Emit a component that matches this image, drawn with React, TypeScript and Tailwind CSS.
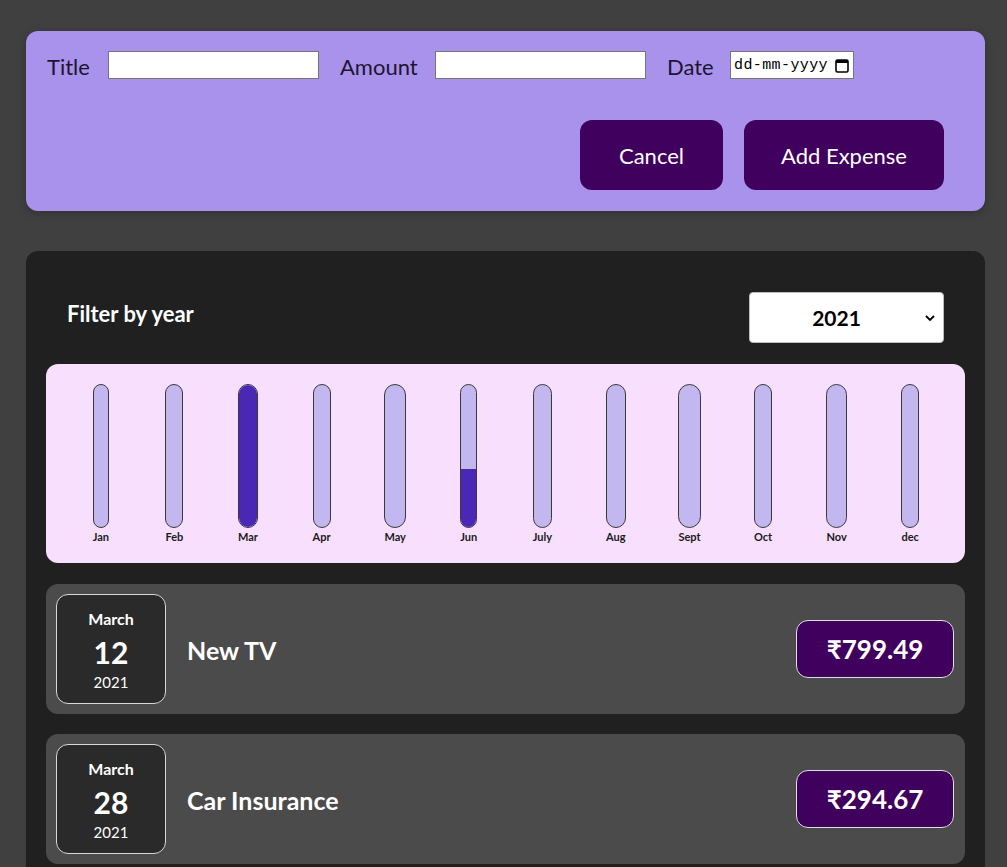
const months = [
  { label: 'Jan', fill: 0 },
  { label: 'Feb', fill: 0 },
  { label: 'Mar', fill: 100 },
  { label: 'Apr', fill: 0 },
  { label: 'May', fill: 0 },
  { label: 'Jun', fill: 41 },
  { label: 'July', fill: 0 },
  { label: 'Aug', fill: 0 },
  { label: 'Sept', fill: 0 },
  { label: 'Oct', fill: 0 },
  { label: 'Nov', fill: 0 },
  { label: 'dec', fill: 0 },
]

const expenses = [
  { month: 'March', day: '12', year: '2021', title: 'New TV', amount: '₹799.49' },
  { month: 'March', day: '28', year: '2021', title: 'Car Insurance', amount: '₹294.67' },
]

function ExpenseForm() {
  return (
    <div className="rounded-xl bg-[#a992ec] px-[21px] pt-5 pb-[21px] shadow-[0_2px_8px_rgba(0,0,0,0.25)]">
      <div className="flex h-[28px] items-center text-[22px] leading-[28px] text-[#1c1530]">
        <label className="mt-1 w-[61px]">Title</label>
        <input className="h-[28px] w-[211px] border border-[#767676] bg-white" />
        <label className="mt-1 ml-[21px] w-[95px]">Amount</label>
        <input className="h-[28px] w-[211px] border border-[#767676] bg-white" />
        <label className="mt-1 ml-[21px] w-[63px]">Date</label>
        <div className="flex h-[28px] w-[124px] items-center justify-between border border-[#767676] bg-white pl-[3px] pr-[4px] font-['Liberation_Mono',monospace] text-[15px] leading-none tracking-[0.4px] text-black">
          <span>dd-mm-yyyy</span>
          <svg width="14" height="15" viewBox="0 0 14 15">
            <rect x="1" y="2" width="12" height="12" rx="1.5" fill="none" stroke="#000" strokeWidth="1.6" />
            <rect x="1" y="2" width="12" height="3" fill="#000" />
          </svg>
        </div>
      </div>
      <div className="mt-[41px] flex justify-end gap-[21px] pr-[20px]">
        <button className="h-[70px] w-[143px] rounded-xl bg-[#40005d] text-[22px] text-white">Cancel</button>
        <button className="h-[70px] w-[200px] rounded-xl bg-[#40005d] text-[22px] text-white">Add Expense</button>
      </div>
    </div>
  )
}

function Chart() {
  return (
    <div className="grid grid-cols-12 rounded-xl bg-[#f8dffd] px-[18px] pt-5 pb-[19px]">
      {months.map((m) => (
        <div key={m.label} className="flex justify-center">
          <div className="inline-flex flex-col items-stretch">
            <div className="flex h-[144px] flex-col justify-end overflow-hidden rounded-full border border-[#3a3a3a] bg-[#c3b7f0]">
              <div className="bg-[#4a28b5]" style={{ height: `${m.fill}%` }} />
            </div>
            <span className="mt-[2px] text-center text-[11px] leading-[14px] font-bold text-[#1a1a1a]">{m.label}</span>
          </div>
        </div>
      ))}
    </div>
  )
}

function ExpenseItem({ e }: { e: (typeof expenses)[number] }) {
  return (
    <li className="flex items-center rounded-xl bg-[#4b4b4b] p-[10px] pr-[11px]">
      <div className="flex h-[110px] w-[110px] flex-col items-center justify-center rounded-xl border border-[#d8d8d8] bg-[#2a2a2a] text-white">
        <span className="text-[16px] leading-[24px] font-bold">{e.month}</span>
        <span className="text-[30px] leading-[42px] font-bold">{e.day}</span>
        <span className="text-[15px] leading-[18px]">{e.year}</span>
      </div>
      <h2 className="mt-1 ml-[21px] flex-1 text-[25px] font-bold text-white">{e.title}</h2>
      <div className="flex h-[58px] w-[158px] items-center justify-center rounded-xl border border-[#e0e0e0] bg-[#40005d] text-[26px] font-bold text-white">
        {e.amount}
      </div>
    </li>
  )
}

export default function App() {
  return (
    <div className="min-h-[867px] bg-[#404040] pt-[31px] font-['Lato',sans-serif]">
      <div className="ml-[26px] w-[959px]">
        <ExpenseForm />
        <div className="mt-10 rounded-xl bg-[#202020] px-5 pt-[41px] pb-5">
          <div className="mb-[21px] flex items-center justify-between px-[21px]">
            <span className="mb-[9px] text-[22px] font-bold text-white">Filter by year</span>
            <div className="relative flex h-[51px] w-[195px] items-center justify-center rounded border border-[#bdbdbd] bg-white pr-5 text-[21px] font-bold text-black">
              2021
              <svg className="absolute right-[7px]" width="12" height="12" viewBox="0 0 12 12">
                <path d="M2 4 L6 8 L10 4" fill="none" stroke="#000" strokeWidth="1.8" />
              </svg>
            </div>
          </div>
          <Chart />
          <ul className="mt-[21px] flex flex-col gap-5">
            {expenses.map((e) => (
              <ExpenseItem key={e.day} e={e} />
            ))}
          </ul>
        </div>
      </div>
    </div>
  )
}
